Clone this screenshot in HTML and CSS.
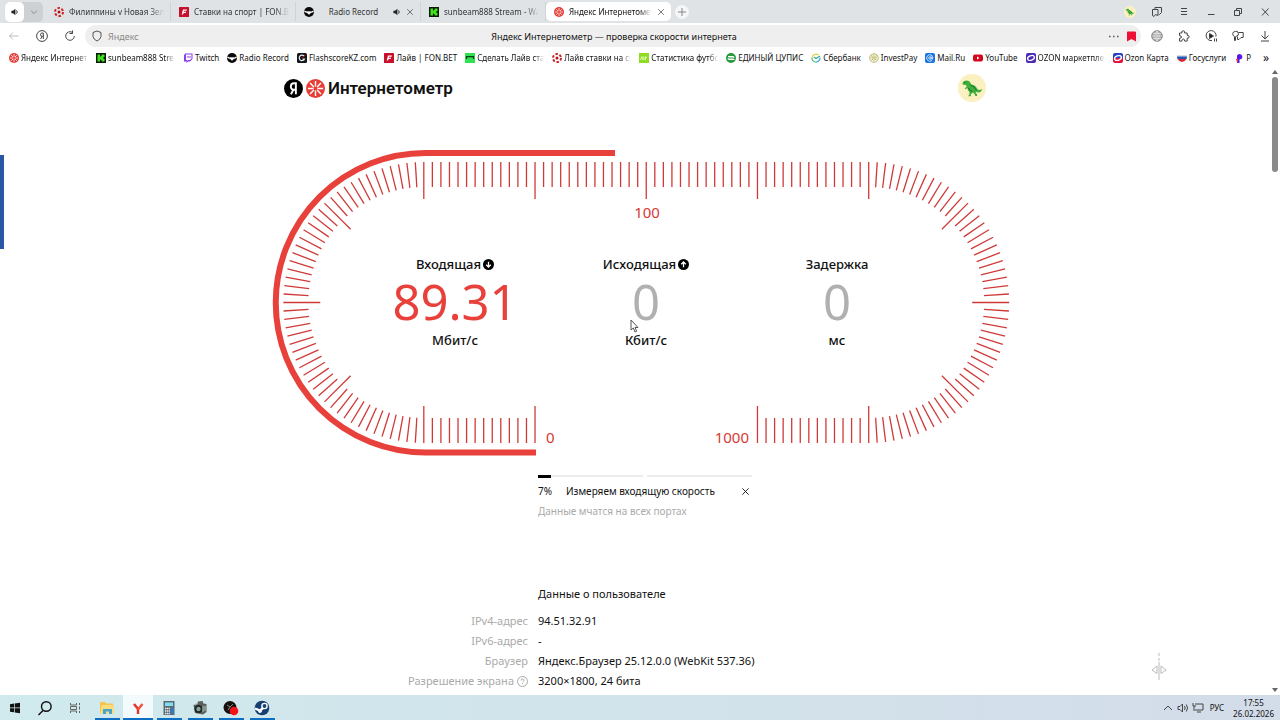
FILE: index.html
```html
<!DOCTYPE html>
<html lang="ru">
<head>
  <meta charset="UTF-8">
  <meta name="viewport" content="width=device-width, initial-scale=1.0">
  <title>Яндекс Интернетометр — проверка скорости интернета</title>
  <link rel="stylesheet" href="styles.css">
</head>
<body>

  <!-- Shared icons -->
  <svg class="sprite" aria-hidden="true">
    <symbol id="i-meter" viewBox="0 0 20 20">
      <circle cx="10" cy="10" r="10" fill="#e63e37"/>
      <path d="M10 2v6M10 12v6M2 10h6M12 10h6M4.3 4.3l4 4M11.700 11.700l4 4M15.700 4.300l-4 4M8.300 11.700l-4 4" stroke="#fff" stroke-width="1.500"/>
    </symbol>
    <symbol id="i-flash" viewBox="0 0 20 20">
      <circle cx="10" cy="10" r="8" fill="none" stroke="#c22" stroke-width="4" stroke-dasharray="5 3.380"/>
      <circle cx="10" cy="10" r="3" fill="#b3121f"/>
    </symbol>
    <symbol id="i-fon" viewBox="0 0 20 20">
      <rect width="20" height="20" rx="1" fill="#c8102e"/>
      <path d="M8 5h8l-.7 2.600H10l-.4 1.700h4.400l-.6 2.500H9L8.200 15H5.400z" fill="#fff"/>
    </symbol>
    <symbol id="i-record" viewBox="0 0 20 20">
      <circle cx="10" cy="10" r="10" fill="#0a0a0a"/>
      <path d="M0 7.500c4 0 5 1.500 7 1.500l1-1.500L9 9h2l1-1.500L13 9c2 0 3-1.500 7-1.500-1 4-5 3.500-7 5l-3 3-3-3c-2-1.500-6-1-7-5z" fill="#fff"/>
    </symbol>
    <symbol id="i-kick" viewBox="0 0 20 20">
      <rect width="20" height="20" fill="#0c1a08"/>
      <path d="M3 3h5v4h2V5h2V3h5v5h-2v4h2v5h-5v-2h-2v-2H8v4H3z" fill="#3fe51c"/>
    </symbol>
    <symbol id="i-twitch" viewBox="0 0 20 20">
      <path d="M4 1h15v11l-5 5h-4l-3 3v-3H2V5z" fill="#8a3df0"/>
      <path d="M6 3h11v8l-3 3h-4l-2 2v-2H6z" fill="#fff"/>
      <path d="M10 6v4M14 6v4" stroke="#8a3df0" stroke-width="2"/>
    </symbol>
    <symbol id="i-fskz" viewBox="0 0 20 20">
      <rect width="20" height="20" rx="3" fill="#10161c"/>
      <path d="M14 6a5.500 5.500 0 1 0 1 6h-4" fill="none" stroke="#e8e8e8" stroke-width="2.500"/>
      <path d="M11 9l6-5" stroke="#d22" stroke-width="2"/>
    </symbol>
    <symbol id="i-bet" viewBox="0 0 20 20">
      <rect width="20" height="20" fill="#2fe24f"/>
      <path d="M3 12V7h14v5" fill="none" stroke="#0b3c17" stroke-width="2.500"/>
    </symbol>
    <symbol id="i-stat" viewBox="0 0 20 20">
      <rect width="20" height="20" fill="#8fdc22"/>
      <path d="M3 14l3-7 2 7M10 7v7M13 14V7l3 3" fill="none" stroke="#e7fbc6" stroke-width="1.800"/>
    </symbol>
    <symbol id="i-cupis" viewBox="0 0 20 20">
      <circle cx="10" cy="10" r="10" fill="#269a3d"/>
      <path d="M4 7h10q2 0 2 1.500T14 10H6q-2 0-2 1.500T6 13h11" fill="none" stroke="#fff" stroke-width="2"/>
    </symbol>
    <symbol id="i-sber" viewBox="0 0 20 20">
      <path d="M15 4A8 8 0 0 0 2 10" fill="none" stroke="#e6cf36" stroke-width="2.400"/>
      <path d="M2 10a8 8 0 0 0 8 8" fill="none" stroke="#3bbf6a" stroke-width="2.400"/>
      <path d="M10 18a8 8 0 0 0 8-9" fill="none" stroke="#31a6d8" stroke-width="2.400"/>
      <path d="M6 8l4 3 8-5" fill="none" stroke="#36a6a0" stroke-width="2.400"/>
    </symbol>
    <symbol id="i-invest" viewBox="0 0 20 20">
      <circle cx="10" cy="10" r="8.500" fill="#fdfbe9" stroke="#b3b36a" stroke-width="2"/>
      <path d="M6 5v5h8V5M10 4v6M5 12q5 5 10 0" fill="none" stroke="#a5a84f" stroke-width="1.600"/>
    </symbol>
    <symbol id="i-mail" viewBox="0 0 20 20">
      <rect width="20" height="20" rx="4" fill="#1673e6"/>
      <circle cx="10" cy="10" r="2.600" fill="none" stroke="#fff" stroke-width="1.600"/>
      <path d="M12.600 7.500v3.500q.5 2 2.300 1.400Q17 8 14 5a6.500 6.500 0 1 0 0 10" fill="none" stroke="#fff" stroke-width="1.600"/>
    </symbol>
    <symbol id="i-yt" viewBox="0 0 20 20">
      <rect y="3" width="20" height="14" rx="4" fill="#d3081f"/>
      <path d="M8 7v6l5-3z" fill="#fff"/>
    </symbol>
    <symbol id="i-ozon" viewBox="0 0 20 20">
      <rect width="20" height="20" rx="4" fill="#4b2bb5"/>
      <ellipse cx="10" cy="10" rx="7" ry="4.500" fill="none" stroke="#fff" stroke-width="2.600" transform="rotate(-20 10 10)"/>
    </symbol>
    <symbol id="i-ozcard" viewBox="0 0 20 20">
      <path d="M4 0h12q4 0 4 4v6H0V4q0-4 4-4z" fill="#2340c8"/>
      <path d="M0 10h20v6q0 4-4 4H4q-4 0-4-4z" fill="#e0103f"/>
      <ellipse cx="10" cy="10" rx="7" ry="4.500" fill="none" stroke="#fff" stroke-width="2.800" transform="rotate(-20 10 10)"/>
    </symbol>
    <symbol id="i-gos" viewBox="0 0 20 20">
      <path d="M0 4h20v4H0z" fill="#d9dde8"/>
      <path d="M0 7h20q0 3-1 5H1Q0 10 0 7z" fill="#2458b8"/>
      <path d="M1 12h18q-3 5-9 6-6-1-9-6z" fill="#dc2438"/>
    </symbol>
    <symbol id="i-p" viewBox="0 0 20 20">
      <path d="M6 5q3-5 8-2 5 4 1 9l-4 1v7H6z" fill="#5a17e6"/>
      <path d="M4 12h4v7H6z" fill="#e34"/>
    </symbol>
    <symbol id="i-dino" viewBox="0 0 28 28">
      <circle cx="14" cy="14" r="14" fill="#faf0c0"/>
      <path d="M4.500 9q.5-2 3.500-2.500 3-.3 4 1.500.5 1.800 1.500 2.500 4 .7 5.500 4 2 3 4.500.3.700 3-2.500 3.700-2 .2-3-1l-.3 1.300 1.300 1.400.2 1.800h-2l-.3-1.500-2-2-2 1.500v2.300h-2.500l.2-1 .8-.5V18q-2-1.500-2-4l-1.800 1.300-1-.5 2-2-.6-1.800H6.500l-1.800-.5z" fill="#3fae3a"/>
      <path d="M12.500 11q4 1 6 5.500M10.500 14q1 3 4 3.500M6 8.200h1.500" fill="none" stroke="#176b2a" stroke-width=".9"/>
    </symbol>
    <symbol id="i-sound" viewBox="0 0 20 20">
      <path d="M1 7h4l6-5v16l-6-5H1z" fill="#222"/>
      <path d="M14 6q3 4 0 8" fill="none" stroke="#222" stroke-width="2.400"/>
    </symbol>
    <symbol id="i-close" viewBox="0 0 10 10">
      <path d="M1.500 1.500l7 7M8.500 1.500l-7 7" fill="none" stroke="currentColor"/>
    </symbol>
  </svg>

  <!-- Tabs -->
  <header class="tabbar">
    <div class="mute">
      <button aria-label="Звук"><svg class="ico"><use href="#i-sound"/></svg></button>
      <button aria-label="Список вкладок"><svg class="ico" viewBox="0 0 10 10"><path d="M1.500 3.500L5 7l3.500-3.500" fill="none" stroke="#777"/></svg></button>
    </div>
    <div class="tabs">
      <button class="tab"><svg class="ico"><use href="#i-flash"/></svg><span class="tab-text fade">Филиппины v Новая Зела</span></button>
      <button class="tab"><svg class="ico"><use href="#i-fon"/></svg><span class="tab-text fade">Ставки на спорт | FON.BE</span></button>
      <button class="tab tab-sound"><svg class="ico"><use href="#i-record"/></svg><span class="tab-text">Radio Record</span><svg class="small-ico"><use href="#i-sound"/></svg><svg class="small-ico"><use href="#i-close"/></svg></button>
      <button class="tab"><svg class="ico"><use href="#i-kick"/></svg><span class="tab-text fade">sunbeam888 Stream - Wat</span></button>
      <button class="tab active"><svg class="ico"><use href="#i-meter"/></svg><span class="tab-text fade">Яндекс Интернетомет</span><svg class="small-ico"><use href="#i-close"/></svg></button>
      <button class="plus" aria-label="Новая вкладка"><svg viewBox="0 0 14 14" width="14" height="14"><path d="M7 3v8M3 7h8" stroke="#888"/></svg></button>
    </div>
    <div class="buttons">
      <button aria-label="Профиль"><svg width="13" height="13"><use href="#i-dino"/></svg></button>
      <button aria-label="Коллекции"><svg viewBox="0 0 12 12"><path d="M4 3V1.500h6.500v5l-2 2H8M1.500 3.500H7v6L4.500 8.500 3 10.500l-1.500-1z"/></svg></button>
      <button aria-label="Меню"><svg viewBox="0 0 12 12"><path d="M3 2.500h6M3 5.500h6M3 8.500h6"/></svg></button>
      <button aria-label="Свернуть"><svg viewBox="0 0 12 12"><path d="M3 8.500h6.500"/></svg></button>
      <button aria-label="Развернуть"><svg viewBox="0 0 12 12"><path d="M2.500 4.500h5v5h-5zM4.500 4.500v-2h5v5h-2"/></svg></button>
      <button aria-label="Закрыть"><svg viewBox="0 0 12 12"><path d="M3 2.500l6.500 7M9.500 2.500l-6.500 7"/></svg></button>
    </div>
  </header>

  <!-- Address bar -->
  <div class="toolbar">
    <div class="nav">
      <button class="dim" aria-label="Назад"><svg viewBox="0 0 12 12"><path d="M10.500 6h-9M5 2.500L1.500 6 5 9.500"/></svg></button>
      <button aria-label="Яндекс"><svg viewBox="0 0 12 12"><circle cx="6" cy="6" r="5.400"/><path d="M7.300 9V3H6.200Q4.500 3 4.500 4.700T6.200 6.300h1M6 6.300L4.600 9"/></svg></button>
      <button aria-label="Обновить"><svg viewBox="0 0 12 12"><path d="M8 2.200A4.300 4.300 0 1 0 10.300 6M8.500.5v3h-3"/></svg></button>
    </div>
    <div class="omnibox">
      <label class="address">
        <svg viewBox="0 0 10 12" width="10" height="12"><path d="M5 1l4 1.500v4Q8.500 9.500 5 11 1.500 9.500 1 6.500v-4z" fill="none" stroke="#555"/></svg>
        <input type="text" placeholder="Яндекс" aria-label="Адрес">
      </label>
      <span class="page-name">Яндекс Интернетометр — проверка скорости интернета</span>
      <div class="omni-right">
        <button aria-label="Ещё"><svg viewBox="0 0 12 12" width="12" height="12"><path d="M1 6.500h1.500M5 6.500h1.500M9 6.500h1.500" stroke="#555" stroke-width="1.300"/></svg></button>
        <button aria-label="Закладка"><svg viewBox="0 0 9 11" width="9" height="11"><path d="M0 1.500Q0 .5 1 .5h7q1 0 1 1V10.500L4.500 8 0 10.500z" fill="#ee1133"/></svg></button>
      </div>
    </div>
    <div class="buttons">
      <button aria-label="Сайт"><svg viewBox="0 0 12 12"><circle cx="6" cy="6" r="5.300" fill="#aaa" stroke="#888"/><path d="M1 6h10M6 1v10M2 3.500h8M2 8.500h8M6 1Q1.500 6 6 11 10.500 6 6 1" stroke="#eee" stroke-width=".6"/></svg></button>
      <button aria-label="Расширения"><svg viewBox="0 0 12 12"><path d="M1.500 3h2.300Q3.300.8 5.200.8T6.600 3h2.600v2.500q2-.4 2 1.300t-2 1.300v3H6.700Q6.700 9 5.300 9T3.900 11.100H1.500V8.300Q3.500 8.300 3.500 7t-2-1.300z"/></svg></button>
      <button aria-label="Видео"><svg viewBox="0 0 12 12"><path d="M7 10.500A5 5 0 1 1 11 6.500"/><path d="M4.500 3.500v5l4-2.500z" fill="#222"/><path d="M9.500 8.500v3M11.500 8.500v3"/></svg></button>
      <button aria-label="Пароли"><svg viewBox="0 0 12 12"><path d="M3.500 6.500v4h-1v-4Q.5 5.500.7 3.600T3.500 1.300t2.800 2V5L4 6.500M6.300 2.500h4.900v5H9L7 9.500H5.500v-3"/></svg></button>
      <button aria-label="Загрузки"><svg viewBox="0 0 12 12"><path d="M6 1v8M2.500 5.500L6 9l3.500-3.500M2 11h8"/></svg></button>
    </div>
  </div>

  <!-- Bookmarks -->
  <nav class="bookmarks">
    <a href="#"><svg class="ico"><use href="#i-meter"/></svg><span class="fade">Яндекс Интернет</span></a>
    <a href="#"><svg class="ico"><use href="#i-kick"/></svg><span class="fade">sunbeam888 Strea</span></a>
    <a href="#"><svg class="ico"><use href="#i-twitch"/></svg><span>Twitch</span></a>
    <a href="#"><svg class="ico"><use href="#i-record"/></svg><span>Radio Record</span></a>
    <a href="#"><svg class="ico"><use href="#i-fskz"/></svg><span>FlashscoreKZ.com</span></a>
    <a href="#"><svg class="ico"><use href="#i-fon"/></svg><span>Лайв | FON.BET</span></a>
    <a href="#"><svg class="ico"><use href="#i-bet"/></svg><span class="fade">Сделать Лайв ста</span></a>
    <a href="#"><svg class="ico"><use href="#i-flash"/></svg><span class="fade">Лайв ставки на сп</span></a>
    <a href="#"><svg class="ico"><use href="#i-stat"/></svg><span class="fade">Статистика футбо</span></a>
    <a href="#"><svg class="ico"><use href="#i-cupis"/></svg><span>ЕДИНЫЙ ЦУПИС</span></a>
    <a href="#"><svg class="ico"><use href="#i-sber"/></svg><span>Сбербанк</span></a>
    <a href="#"><svg class="ico"><use href="#i-invest"/></svg><span>InvestPay</span></a>
    <a href="#"><svg class="ico"><use href="#i-mail"/></svg><span>Mail.Ru</span></a>
    <a href="#"><svg class="ico"><use href="#i-yt"/></svg><span>YouTube</span></a>
    <a href="#"><svg class="ico"><use href="#i-ozon"/></svg><span class="fade">OZON маркетпле</span></a>
    <a href="#"><svg class="ico"><use href="#i-ozcard"/></svg><span>Ozon Карта</span></a>
    <a href="#"><svg class="ico"><use href="#i-gos"/></svg><span>Госуслуги</span></a>
    <a href="#"><svg class="ico"><use href="#i-p"/></svg><span>Р</span></a>
    <button class="more" aria-label="Ещё закладки">»</button>
  </nav>

  <!-- Page -->
  <div class="view">
    <main class="page">
      <div class="container">

        <div class="head">
          <a class="logo" href="#">
            <svg viewBox="0 0 20 20" width="19" height="19"><circle cx="10" cy="10" r="10" fill="#000"/><path d="M12.500 16V4.500h-1.800Q7.200 4.500 7.200 8t3.500 3.300h1.500M10 11L7.300 16" fill="none" stroke="#fff" stroke-width="2"/></svg>
            <svg width="19" height="19"><use href="#i-meter"/></svg>
            <span>Интернетометр</span>
          </a>
          <button class="avatar" aria-label="Профиль"><svg width="28" height="28"><use href="#i-dino"/></svg></button>
        </div>

        <section class="gauge">
          <svg class="dial" viewBox="272 146 740 312">
            <path class="band" d="M536 452.500H425.500A149.700 149.700 0 0 1 425.500 153H615"/>
            <g id="ticks"></g>
            <text x="647" y="218" text-anchor="middle">100</text>
            <text x="546" y="443">0</text>
            <text x="749" y="443" text-anchor="end">1000</text>
          </svg>
          <div class="results">
            <div class="result">
              <h2>Входящая <svg viewBox="0 0 12 12"><circle cx="6" cy="6" r="6"/><path d="M6 3v5.500M3.500 6.200L6 8.700l2.500-2.500"/></svg></h2>
              <div class="value now">89.31</div>
              <div class="unit">Мбит/с</div>
            </div>
            <div class="result">
              <h2>Исходящая <svg viewBox="0 0 12 12"><circle cx="6" cy="6" r="6"/><path d="M6 9V3.500M3.500 5.800L6 3.300l2.500 2.500"/></svg></h2>
              <div class="value">0</div>
              <div class="unit">Кбит/с</div>
            </div>
            <div class="result">
              <h2>Задержка</h2>
              <div class="value">0</div>
              <div class="unit">мс</div>
            </div>
          </div>
        </section>

        <section class="progress">
          <div class="bars">
            <div class="bar"><div class="bar-fill" style="width: 12%"></div></div>
            <div class="bar"></div>
          </div>
          <div class="status">
            <span class="percent">7%</span>
            <span>Измеряем входящую скорость</span>
            <button class="stop" aria-label="Остановить"><svg width="9" height="9"><use href="#i-close"/></svg></button>
          </div>
          <p class="hint">Данные мчатся на всех портах</p>
        </section>

        <section class="info">
          <h3>Данные о пользователе</h3>
          <dl>
            <dt>IPv4-адрес</dt><dd>94.51.32.91</dd>
            <dt>IPv6-адрес</dt><dd>-</dd>
            <dt>Браузер</dt><dd>Яндекс.Браузер 25.12.0.0 (WebKit 537.36)</dd>
            <dt>Разрешение экрана <svg viewBox="0 0 11 11"><circle cx="5.500" cy="5.500" r="5"/><path d="M4 4.500Q4 3 5.500 3T7 4.300q0 .8-1.500 1.700M5.500 7.200v1"/></svg></dt><dd>3200×1800, 24 бита</dd>
          </dl>
        </section>

      </div>

      <div class="side-mark"></div>
      <svg class="split" viewBox="0 0 16 28"><path d="M8 0v8" stroke-dasharray="3 2"/><path d="M8 9v18M6 13l-5 4 5 3.500zM10 13l5 4-5 3.500z"/></svg>
      <svg class="cursor" viewBox="0 0 9 14"><path d="M1 1v10l2.300-2 1.700 4 1.600-.7L5 8.500h3z"/></svg>
    </main>
    <div class="scroll">
      <svg viewBox="0 0 6 4"><path d="M0 4l3-4 3 4z"/></svg>
      <div class="thumb"></div>
      <svg viewBox="0 0 6 4"><path d="M0 0l3 4 3-4z"/></svg>
    </div>
  </div>

  <!-- Taskbar -->
  <footer class="taskbar">
    <div class="sys">
      <button aria-label="Пуск"><svg viewBox="0 0 16 16"><path d="M3 4.200l4-.6v4H3zM7.700 3.500L13 2.700v4.900H7.700zM3 8.300h4v4l-4-.6zM7.700 8.300H13v4.900l-5.300-.8z" fill="#111"/></svg></button>
      <button aria-label="Поиск"><svg viewBox="0 0 16 16"><path d="M6 10.500L1.500 15" stroke="#111" stroke-width="1.500"/><circle cx="9.300" cy="6.500" r="4.800" fill="none" stroke="#111" stroke-width="1.400"/></svg></button>
      <button aria-label="Представление задач"><svg viewBox="0 0 16 16"><path d="M3.500 3v2h6V3M3.500 13v-2h6v2M3.500 6.500h6v3h-6zM12.500 3v2M12.500 6.500v3M12.500 11v2" fill="none" stroke="#666"/></svg></button>
    </div>
    <div class="apps">
      <button aria-label="Проводник"><svg viewBox="0 0 16 16"><path d="M1 2h5l1.500 1.500H14V13H1z" fill="#f3c64b"/><path d="M2.500 5H15v8.500H1.500z" fill="#f9dc7c"/><path d="M4 14V9h9v5h-3v-2.500H7V14z" fill="#4aa3c9"/></svg></button>
      <button class="current" aria-label="Яндекс Браузер"><svg viewBox="0 0 16 16"><path d="M4 4l4 5v5" fill="none" stroke="#e8302a" stroke-width="2.400"/><path d="M12.500 4L8 9.500" fill="none" stroke="#f0503c" stroke-width="2.400"/></svg></button>
      <button aria-label="Калькулятор"><svg viewBox="0 0 16 16"><path d="M2.500 1h11v14h-11z" fill="#5d6a72"/><path d="M4 2.500h8V6H4z" fill="#7fe0f5"/><path d="M4 8.500h5M4 11h5M4 13.500h5" stroke="#e8eef0" stroke-width="1.500" stroke-dasharray="1.500 .5"/><path d="M10 8h2.500v6H10z" fill="#2b7fd0"/></svg></button>
      <button aria-label="Камера"><svg viewBox="0 0 16 16"><path d="M1.500 5L5 4l1-2.500 4.500-.5 1 2.500 3 .5v8L11 14.500 3 13z" fill="#59625d"/><circle cx="6.500" cy="9" r="4" fill="#222"/><circle cx="6.500" cy="9" r="2.200" fill="#7fa8a0"/><path d="M11 6v6M13 6v5M3 5l3-2" stroke="#a9b3ae" stroke-width="1.200"/></svg></button>
      <button aria-label="Запись"><svg viewBox="0 0 16 16"><circle cx="7" cy="7.500" r="6.500" fill="#16110f"/><path d="M4 5l3 2 3-3M5 10l2-3" stroke="#8d8580" fill="none" stroke-width="1"/><circle cx="11" cy="11" r="4.300" fill="#f3121a"/></svg></button>
      <button aria-label="Steam"><svg viewBox="0 0 16 16"><circle cx="8" cy="8" r="7.300" fill="#15406f"/><circle cx="10.500" cy="6" r="2.600" fill="none" stroke="#fff" stroke-width="1.400"/><path d="M1 8.500l5 2.200 3-2.700" fill="none" stroke="#fff" stroke-width="2.400"/><circle cx="6" cy="11.300" r="1.800" fill="#fff"/></svg></button>
    </div>
    <div class="tray">
      <svg viewBox="0 0 12 12"><path d="M2 8l4-4 4 4"/></svg>
      <svg viewBox="0 0 12 12"><path d="M1 4.500h2l2.500-2.500v8L3 7.500H1zM7.500 4q1.300 2 0 4M9.300 2.500q2.500 3.500 0 7"/></svg>
      <svg viewBox="0 0 12 12"><path d="M3 2h8v6H3M1 1v3M1 4h3M2 4v5M5 10h4"/></svg>
      <span class="lang">РУС</span>
      <div class="clock"><div>17:55</div><div>26.02.2026</div></div>
    </div>
  </footer>

  <script src="script.js"></script>
</body>
</html>
```
FILE: styles.css
```css
* {
  box-sizing: border-box;
}

body {
  margin: 0;
  height: 100vh;
  display: flex;
  flex-direction: column;
  overflow: hidden;
  background: #fff;
  color: #111;
  font-family: "Noto Sans", sans-serif;
  font-size: 9px;
}

button,
input {
  margin: 0;
  padding: 0;
  border: 0;
  background: none;
  color: inherit;
  font: inherit;
}

button {
  display: flex;
  align-items: center;
  justify-content: center;
}

a {
  color: inherit;
  text-decoration: none;
}

svg {
  flex: none;
  display: block;
}

.sprite {
  position: absolute;
  width: 0;
  height: 0;
}

.ico {
  width: 10px;
  height: 10px;
}

.small-ico {
  width: 8px;
  height: 8px;
  color: #555;
}

.fade {
  -webkit-mask-image: linear-gradient(to right, #000 85%, transparent);
  mask-image: linear-gradient(to right, #000 85%, transparent);
}

/* Tabs */
.tabbar {
  display: flex;
  align-items: center;
  height: 23px;
  padding-left: 5px;
  background: #dfe3e6;
}

.mute {
  display: flex;
  height: 20px;
  border-radius: 5px;
  background: #cdd1d4;
}

.mute button {
  width: 19px;
  border-radius: 5px;
}

.mute button:first-child {
  background: #fff;
}

.mute .ico {
  width: 8px;
  height: 8px;
}

.tabs {
  flex: 1;
  display: flex;
  align-items: center;
  padding-left: 3px;
  font-size: 8px;
}

.tab {
  width: 125px;
  height: 19px;
  padding: 0 6px 0 8px;
  gap: 5px;
  justify-content: flex-start;
  border-right: 1px solid #cfd3d6;
  color: #333;
}

.tab-text {
  flex: 1;
  overflow: hidden;
  white-space: nowrap;
  text-align: left;
}

.tab-sound .tab-text {
  text-align: center;
}

.tab.active {
  border: 0;
  border-radius: 5px;
  background: #fff;
  color: #111;
}

.plus {
  width: 14px;
  height: 14px;
  margin-left: 4px;
  border-radius: 50%;
  background: #f5f6f7;
}

.buttons,
.nav {
  display: flex;
  padding-right: 2px;
}

.buttons button {
  width: 27px;
}

.nav button {
  width: 28px;
}

.buttons svg,
.nav svg {
  width: 12px;
  height: 12px;
  fill: none;
  stroke: #444;
}

.tabbar .buttons button:first-child svg {
  stroke: none;
}

.nav .dim svg {
  stroke: #bbb;
}

/* Address bar */
.toolbar {
  display: flex;
  align-items: center;
  height: 26px;
}

.nav {
  padding-right: 1px;
}

.omnibox {
  flex: 1;
  display: grid;
  grid-template-columns: 1fr auto 1fr;
  align-items: center;
  height: 22px;
  margin-right: 2px;
  padding: 0 5px 0 7px;
  border-radius: 11px;
  background: #efefef;
}

.address {
  display: flex;
  align-items: center;
  gap: 6px;
}

.address input {
  width: 100px;
  color: #777;
}

.address input::placeholder {
  color: #888;
}

.omni-right {
  display: flex;
  justify-content: flex-end;
  gap: 7px;
}

/* Bookmarks */
.bookmarks {
  display: flex;
  align-items: center;
  gap: 8px;
  height: 18px;
  padding: 0 11px 1px 9px;
  overflow: hidden;
  white-space: nowrap;
  font-size: 8px;
}

.bookmarks a {
  display: flex;
  align-items: center;
  gap: 2px;
}

.bookmarks .fade {
  width: 67px;
  overflow: hidden;
}

.more {
  margin-left: auto;
  font-size: 12px;
}

/* Page */
.view {
  flex: 1;
  min-height: 0;
  display: flex;
}

.page {
  position: relative;
  flex: 1;
  overflow: hidden;
}

.container {
  width: 702px;
  max-width: 100%;
  margin: 0 auto;
  font-size: 11px;
}

.head {
  display: flex;
  align-items: center;
  justify-content: space-between;
  height: 42px;
}

.logo {
  display: flex;
  align-items: center;
  gap: 3px;
  font: 600 17px Roboto, sans-serif;
}

/* Gauge: dial and results share one grid cell */
.gauge {
  display: grid;
  width: 740px;
  margin: 37px 0 0 -12px;
}

.dial,
.results {
  grid-area: 1 / 1;
}

.dial {
  width: 100%;
}

.dial text {
  fill: #d63a34;
  font-size: 15px;
}

.band {
  fill: none;
  stroke: #e8403a;
  stroke-width: 6;
}

.tick {
  stroke: #cf3a38;
  stroke-width: 1.3;
}

.results {
  display: grid;
  grid-template-columns: repeat(3, 191px);
  justify-content: center;
  padding: 109px 0 0 8px;
  text-align: center;
}

.result h2 {
  display: flex;
  align-items: center;
  justify-content: center;
  gap: 2px;
  margin: 0;
  font-size: 13px;
  font-weight: 500;
  line-height: 18px;
}

.result h2 svg {
  width: 11px;
  height: 11px;
}

.result h2 path {
  fill: none;
  stroke: #fff;
  stroke-width: 1.4;
}

.value {
  color: #b0b0b0;
  font-size: 49px;
  line-height: 56px;
}

.value.now {
  color: #e8403a;
}

.unit {
  padding-top: 1px;
  font-size: 13px;
  font-weight: 500;
  line-height: 20px;
}

/* Progress */
.progress {
  width: 214px;
  margin: 17px 0 0 254px;
  font-size: 10px;
}

.bars {
  display: grid;
  grid-template-columns: 1fr 1fr;
  gap: 4px;
  height: 3px;
}

.bar {
  height: 2px;
  background: #ececec;
}

.bar-fill {
  height: 3px;
  background: #000;
}

.status {
  display: flex;
  align-items: center;
  height: 20px;
  margin-top: 3px;
}

.percent {
  width: 28px;
}

.stop {
  margin-left: auto;
  padding-right: 2px;
}

.hint {
  margin: 0;
  color: #aaa;
  line-height: 20px;
}

/* User info */
.info h3 {
  margin: 63px 0 7px 254px;
  font-size: 11px;
  font-weight: 400;
  line-height: 20px;
}

.info dl {
  display: grid;
  grid-template-columns: 244px 1fr;
  column-gap: 10px;
  margin: 0;
  line-height: 20px;
}

.info dt {
  display: flex;
  align-items: center;
  justify-content: flex-end;
  gap: 3px;
  color: #aaa;
}

.info dt svg {
  width: 11px;
  height: 11px;
  fill: none;
  stroke: #aaa;
}

.info dd {
  margin: 0;
}

/* Things floating over the page */
.side-mark {
  position: absolute;
  left: 0;
  top: 88px;
  width: 4px;
  height: 94px;
  background: #2b56a5;
}

.split {
  position: absolute;
  right: 103px;
  bottom: 14px;
  width: 16px;
  height: 28px;
  fill: none;
  stroke: #bbb;
}

.cursor {
  position: absolute;
  left: 630px;
  top: 252px;
  width: 9px;
  height: 14px;
  fill: #fff;
  stroke: #555;
}

/* Scrollbar */
.scroll {
  display: flex;
  flex-direction: column;
  align-items: center;
  width: 10px;
  padding: 3px 0;
}

.scroll svg {
  width: 6px;
  height: 4px;
  fill: #666;
}

.thumb {
  width: 6px;
  height: 95px;
  margin: 3px 0 auto;
  border-radius: 3px;
  background: #8a8a8a;
}

/* Taskbar */
.taskbar {
  display: flex;
  height: 25px;
  background: linear-gradient(to right, #d0eaed, #d3dce9);
}

.sys,
.apps,
.tray {
  display: flex;
}

.taskbar button {
  width: 30px;
  height: 25px;
}

.taskbar button svg {
  width: 16px;
  height: 16px;
}

.apps {
  gap: 1px;
  padding-left: 2px;
}

.taskbar .apps button {
  background: linear-gradient(#0c6fc4, #0c6fc4) center bottom / 25px 2px no-repeat;
}

.taskbar .apps .current {
  background-color: #f3fafb;
  background-size: 30px 2px;
}

.tray {
  align-items: center;
  gap: 3px;
  margin-left: auto;
  padding-right: 6px;
}

.tray svg {
  width: 12px;
  height: 12px;
  fill: none;
  stroke: #444;
}

.lang {
  margin: 0 6px 0 3px;
  font-size: 8px;
}

.clock {
  font-size: 8px;
  line-height: 11px;
  text-align: center;
}
```
FILE: script.js
```js
// draws the scale marks of the dial
const ticks = document.getElementById('ticks');
const left = 423.8;
const right = 868.7;
const middle = 302.5;
const radius = 140.5;
const step = (right - left) / 52;

function addTick(x, y, dx, dy, big) {
  const line = document.createElementNS('http://www.w3.org/2000/svg', 'line');
  const length = big ? 37 : 25;
  line.setAttribute('class', 'tick');
  line.setAttribute('x1', x);
  line.setAttribute('y1', y);
  line.setAttribute('x2', x + dx * length);
  line.setAttribute('y2', y + dy * length);
  ticks.appendChild(line);
}

// top row
for (let i = 0; i <= 52; i++) {
  addTick(left + i * step, middle - radius, 0, 1, i % 13 === 0);
}

// bottom rows, the gap between them is for 0 and 1000
for (let i = 0; i <= 13; i++) {
  addTick(left + i * step, middle + radius, 0, -1, i % 13 === 0);
  addTick(right - i * step, middle + radius, 0, -1, i % 13 === 0);
}

// rounded sides
for (let i = 1; i < 52; i++) {
  const angle = Math.PI * i / 52;
  const dx = Math.sin(angle);
  const dy = Math.cos(angle);
  addTick(left - dx * radius, middle - dy * radius, dx, dy, i % 13 === 0);
  addTick(right + dx * radius, middle - dy * radius, -dx, dy, i % 13 === 0);
}
```
